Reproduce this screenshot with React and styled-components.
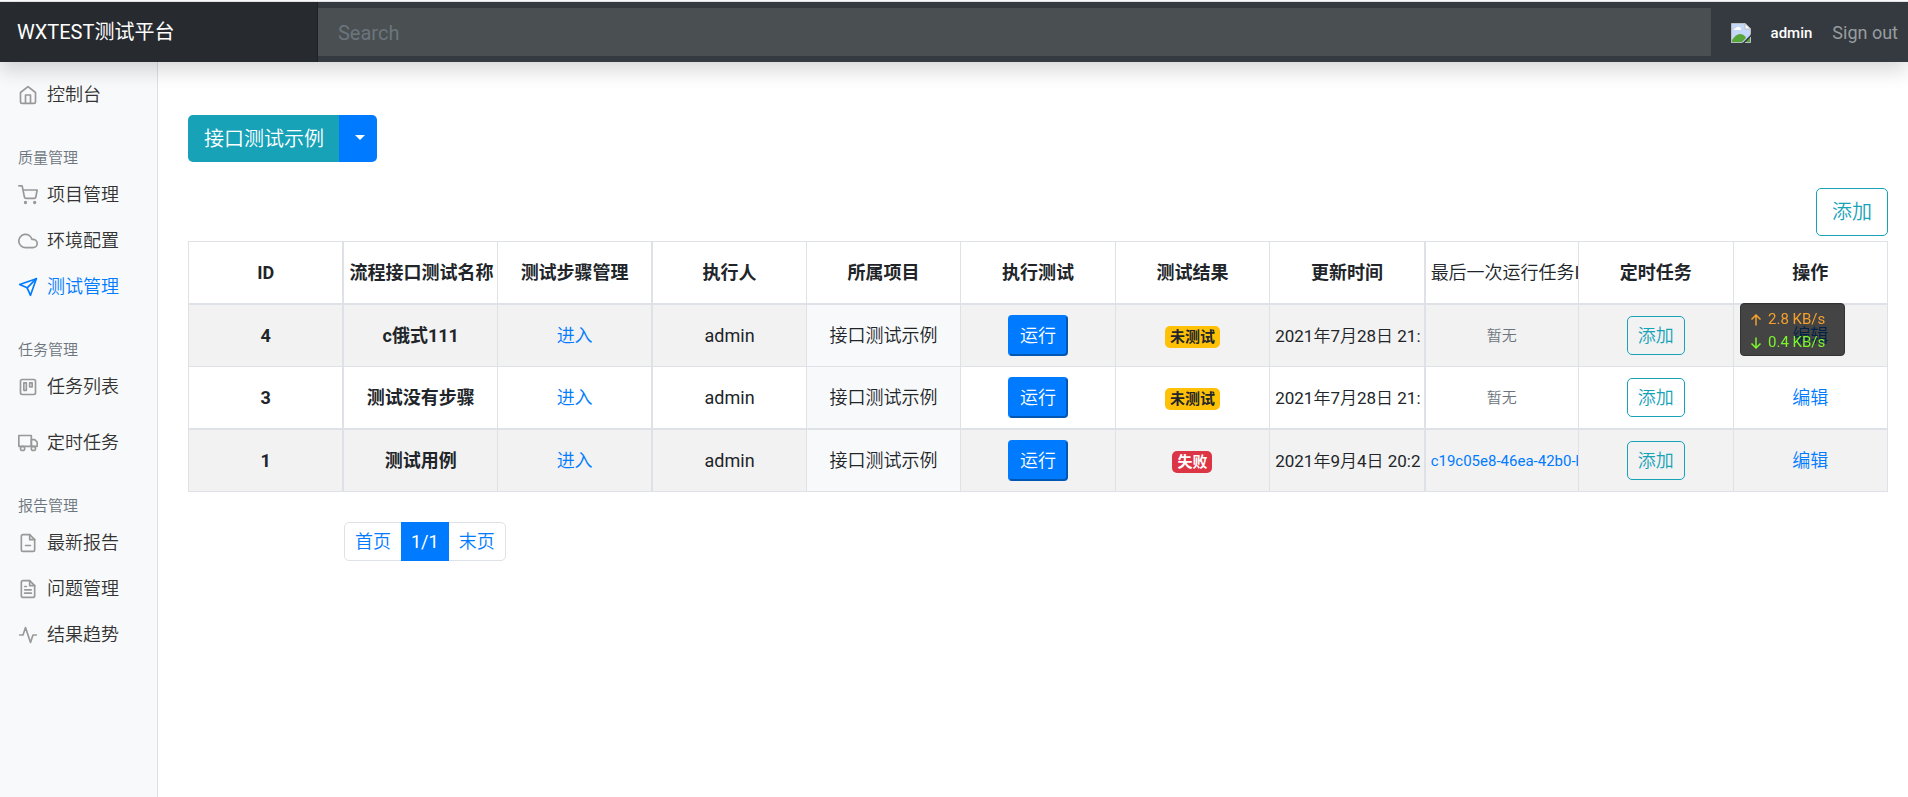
import React from "react";
import styled, { createGlobalStyle } from "styled-components";
import {
  FiHome,
  FiShoppingCart,
  FiCloud,
  FiSend,
  FiTrello,
  FiTruck,
  FiFileMinus,
  FiFileText,
  FiActivity,
} from "react-icons/fi";

const GlobalStyle = createGlobalStyle`
  * {
    box-sizing: border-box;
  }
  body {
    margin: 0;
    background: #fff;
    color: #212529;
    font-family: Roboto, "Noto Sans CJK SC DemiLight", "Noto Sans CJK SC Light", "Noto Sans CJK SC", sans-serif;
    font-size: 18px;
    font-weight: 400;
    line-height: 26px;
  }
  button,
  input {
    font: inherit;
  }
  a {
    color: #007bff;
    text-decoration: none;
  }
`;

const boldFont = `Roboto, "Noto Sans CJK SC", sans-serif`;

const Page = styled.div`
  display: flex;
  flex-direction: column;
  min-height: 100vh;
  padding-top: 1px;
`;
const Navbar = styled.header`
  display: flex;
  align-items: center;
  height: 61px;
  border-top: 1px solid #dee2e6;
  background: #343a40;
  box-shadow: 0 9px 18px rgba(0, 0, 0, 0.15);
  z-index: 1;
`;
const Brand = styled.a`
  display: flex;
  align-items: center;
  align-self: stretch;
  flex: none;
  width: calc(100% / 6);
  padding-left: 17px;
  background: rgba(0, 0, 0, 0.25);
  box-shadow: inset -1px 0 0 rgba(0, 0, 0, 0.25);
  color: #fff;
  font-family: ${boldFont};
  font-size: 20px;
`;
const Search = styled.input`
  flex: 1;
  min-width: 0;
  height: 48px;
  padding: 2px 20px 0;
  border: 0;
  background: #4a4f52;
  color: #fff;
  font-size: 20px;
  &::placeholder {
    color: #6c757d;
    opacity: 1;
  }
`;
const UserBox = styled.div`
  display: flex;
  align-items: center;
  gap: 20px;
  padding: 2px 10px 0 20px;
`;
const UserName = styled.span`
  color: #fff;
  font-size: 15px;
  font-weight: 500;
`;
const SignOut = styled.a`
  color: #999c9f;
`;

const Body = styled.div`
  display: flex;
  flex: 1;
`;
const Sidebar = styled.nav`
  flex: none;
  width: 158px;
  padding-top: 10px;
  background: #f8f9fa;
  box-shadow: inset -1px 0 0 rgba(0, 0, 0, 0.1);
`;
const SideHeading = styled.h6`
  margin: 29px 18px 3px;
  color: #6c757d;
  font-size: 15px;
  font-weight: 400;
  line-height: 22px;
`;
const SideList = styled.ul`
  display: flex;
  flex-direction: column;
  gap: ${(props) => (props.$loose ? "10px" : "0")};
  margin: 0;
  padding: 0;
  list-style: none;
`;
const SideLink = styled.a`
  display: flex;
  align-items: center;
  gap: 9px;
  height: 46px;
  padding-left: 18px;
  color: ${(props) => (props.$active ? "#007bff" : "#333")};
  svg {
    width: 20px;
    height: 20px;
    color: ${(props) => (props.$active ? "#007bff" : "#999")};
  }
`;

const Main = styled.main`
  flex: 1;
  min-width: 0;
  padding: 53px 20px 30px 30px;
`;
const ButtonGroup = styled.div`
  display: flex;
  height: 47px;
  margin-bottom: 26px;
`;
const ProjectButton = styled.button`
  padding: 0 15px 0 16px;
  border: 0;
  border-radius: 5px 0 0 5px;
  background: #17a2b8;
  color: #fff;
  font-size: 20px;
`;
const CaretButton = styled.button`
  display: flex;
  align-items: center;
  justify-content: center;
  width: 38px;
  padding: 0 0 2px 4px;
  border: 0;
  border-radius: 0 5px 5px 0;
  background: #007bff;
`;
const Caret = styled.span`
  border-top: 5px solid #fff;
  border-left: 5px solid transparent;
  border-right: 5px solid transparent;
`;
const Toolbar = styled.div`
  display: flex;
  justify-content: flex-end;
  margin-bottom: 5px;
`;
const OutlineButton = styled.button`
  height: ${(props) => (props.$large ? "48px" : "39px")};
  padding: 0 ${(props) => (props.$large ? "15px" : "10px")};
  border: 1px solid #17a2b8;
  border-radius: 5px;
  background: transparent;
  color: #17a2b8;
  font-size: ${(props) => (props.$large ? "20px" : "18px")};
`;
const RunButton = styled.button`
  display: block;
  height: 41px;
  margin: 0 auto;
  padding: 0 10px;
  border: 2px solid;
  border-color: #007bff #0056b3 #0056b3 #007bff;
  border-radius: 4px;
  background: #007bff;
  color: #fff;
`;

const Table = styled.table`
  width: 100%;
  table-layout: fixed;
  border-collapse: separate;
  border-spacing: 0;
  border: 0 solid #dee2e6;
  border-width: 1px 0 0 1px;
  text-align: center;
`;
const Row = styled.tr`
  height: ${(props) => (props.$ruled ? "63px" : "62px")};
  background: ${(props) => (props.$striped ? "#f2f2f2" : "#fff")};
  > * {
    padding: 0 5px;
    overflow: hidden;
    border: 0 solid #dee2e6;
    border-right-width: 1px;
    border-bottom-width: ${(props) => (props.$ruled ? "2px" : "1px")};
    white-space: nowrap;
  }
  > :nth-child(2),
  > :nth-child(4),
  > :nth-child(9) {
    border-left-width: 1px;
  }
`;
const HeadCell = styled.th`
  font-family: ${(props) => (props.$light ? "inherit" : boldFont)};
  font-weight: ${(props) => (props.$light ? 400 : 700)};
`;
const Cell = styled.td`
  background: ${(props) => (props.$tinted ? "#f8f9fa" : "transparent")};
`;
const DateCell = styled(Cell)`
  font-size: 17px;
`;
const TaskCell = styled(Cell)`
  color: #6c757d;
  font-size: 15px;
`;
const Badge = styled.span`
  display: inline-block;
  padding: 0 5px;
  border-radius: 5px;
  background: ${(props) => (props.$failed ? "#dc3545" : "#ffc107")};
  color: ${(props) => (props.$failed ? "#fff" : "#212529")};
  font-family: ${boldFont};
  font-size: 15px;
  font-weight: 700;
  line-height: 22px;
`;

const Pagination = styled.nav`
  display: flex;
  width: fit-content;
  height: 39px;
  margin: 30px 0 0 156px;
  border: 1px solid #dee2e6;
  border-radius: 5px;
`;
const PageLink = styled.a`
  margin: -1px 0;
  padding: 0 10px;
  line-height: 39px;
  background: ${(props) => (props.$active ? "#007bff" : "transparent")};
  color: ${(props) => (props.$active ? "#fff" : "#007bff")};
`;

const SpeedWidget = styled.div`
  position: fixed;
  top: 303px;
  right: 63px;
  z-index: 2;
  width: 105px;
  padding: 4px 9px 1px;
  border: 1px solid #333;
  border-radius: 4px;
  background: rgba(0, 0, 0, 0.72);
`;
const SpeedLine = styled.div`
  display: flex;
  align-items: center;
  gap: 6px;
  color: ${(props) => props.$color};
  font-size: 15px;
  line-height: 23px;
`;

const sections = [
  { items: [{ label: "控制台", icon: FiHome }] },
  {
    title: "质量管理",
    items: [
      { label: "项目管理", icon: FiShoppingCart },
      { label: "环境配置", icon: FiCloud },
      { label: "测试管理", icon: FiSend, active: true },
    ],
  },
  {
    title: "任务管理",
    loose: true,
    items: [
      { label: "任务列表", icon: FiTrello },
      { label: "定时任务", icon: FiTruck },
    ],
  },
  {
    title: "报告管理",
    items: [
      { label: "最新报告", icon: FiFileMinus },
      { label: "问题管理", icon: FiFileText },
      { label: "结果趋势", icon: FiActivity },
    ],
  },
];

const columns = [
  "ID",
  "流程接口测试名称",
  "测试步骤管理",
  "执行人",
  "所属项目",
  "执行测试",
  "测试结果",
  "更新时间",
  "最后一次运行任务ID",
  "定时任务",
  "操作",
];

const cases = [
  { id: 4, name: "c俄式111", result: "未测试", time: "2021年7月28日 21:" },
  { id: 3, name: "测试没有步骤", result: "未测试", time: "2021年7月28日 21:" },
  {
    id: 1,
    name: "测试用例",
    result: "失败",
    time: "2021年9月4日 20:2",
    task: "c19c05e8-46ea-42b0-b",
  },
];

const BrokenImage = () => (
  <svg width="20" height="20" viewBox="0 0 20 20" role="img" aria-label="avatar">
    <path d="M0.5 0.5H14L19.5 6V12L12 19.5H0.5Z" fill="#c6d8f7" />
    <path d="M3 7q0-2 2-2 1-2 3-1 2 0 2 3Z" fill="#fff" />
    <path d="M1 19V17q4-6 8-6 4 0 6 4l-4 4Z" fill="#57a639" />
    <path d="M20 13.5V20H14Z" fill="#57a639" />
    <path d="M0.5 20V0.5H14L19.5 6V11" fill="none" stroke="#b9bcc0" />
    <path d="M14 0.5V6h5.5Z" fill="#fff" stroke="#b9bcc0" />
    <path d="M0 19.5H11M14 19.5H19.5V14" fill="none" stroke="#b9bcc0" />
  </svg>
);

const Arrow = ({ down }) => (
  <svg width="12" height="12" viewBox="0 0 12 12" aria-hidden="true">
    <path
      d={down ? "M6 0.5V11M1.5 6.5L6 11L10.5 6.5" : "M6 11.5V1M1.5 5.5L6 1L10.5 5.5"}
      fill="none"
      stroke="currentColor"
      strokeWidth="1.5"
    />
  </svg>
);

const SideSection = ({ title, items, loose }) => (
  <>
    {title && <SideHeading>{title}</SideHeading>}
    <SideList $loose={loose}>
      {items.map(({ label, icon: Icon, active }) => (
        <li key={label}>
          <SideLink href="#" $active={active}>
            <Icon />
            {label}
          </SideLink>
        </li>
      ))}
    </SideList>
  </>
);

const CaseRow = ({ item, index }) => (
  <Row $striped={index % 2 === 0} $ruled={index === 1}>
    <HeadCell scope="row">{item.id}</HeadCell>
    <HeadCell as="td">{item.name}</HeadCell>
    <Cell>
      <a href="#">进入</a>
    </Cell>
    <Cell>admin</Cell>
    <Cell $tinted>接口测试示例</Cell>
    <Cell>
      <RunButton type="button">运行</RunButton>
    </Cell>
    <Cell>
      <Badge $failed={item.result === "失败"}>{item.result}</Badge>
    </Cell>
    <DateCell>{item.time}</DateCell>
    <TaskCell>{item.task ? <a href="#">{item.task}</a> : "暂无"}</TaskCell>
    <Cell>
      <OutlineButton type="button">添加</OutlineButton>
    </Cell>
    <Cell>
      <a href="#">编辑</a>
    </Cell>
  </Row>
);

const App = () => {
  return (
    <Page>
      <GlobalStyle />
      <Navbar>
        <Brand href="#">WXTEST测试平台</Brand>
        <Search type="text" placeholder="Search" aria-label="Search" />
        <UserBox>
          <BrokenImage />
          <UserName>admin</UserName>
          <SignOut href="#">Sign out</SignOut>
        </UserBox>
      </Navbar>
      <Body>
        <Sidebar>
          {sections.map((section, i) => (
            <SideSection key={i} {...section} />
          ))}
        </Sidebar>
        <Main>
          <ButtonGroup>
            <ProjectButton type="button">接口测试示例</ProjectButton>
            <CaretButton type="button" aria-label="切换项目">
              <Caret />
            </CaretButton>
          </ButtonGroup>
          <Toolbar>
            <OutlineButton type="button" $large>
              添加
            </OutlineButton>
          </Toolbar>
          <Table>
            <thead>
              <Row $ruled>
                {columns.map((title, i) => (
                  <HeadCell key={title} scope="col" $light={i === 8}>
                    {title}
                  </HeadCell>
                ))}
              </Row>
            </thead>
            <tbody>
              {cases.map((item, i) => (
                <CaseRow key={item.id} item={item} index={i} />
              ))}
            </tbody>
          </Table>
          <Pagination aria-label="分页">
            <PageLink href="#">首页</PageLink>
            <PageLink href="#" $active>
              1/1
            </PageLink>
            <PageLink href="#">末页</PageLink>
          </Pagination>
        </Main>
      </Body>
      <SpeedWidget>
        <SpeedLine $color="#f5a02c">
          <Arrow />
          2.8 KB/s
        </SpeedLine>
        <SpeedLine $color="#7cf52b">
          <Arrow down />
          0.4 KB/s
        </SpeedLine>
      </SpeedWidget>
    </Page>
  );
};

export default App;
